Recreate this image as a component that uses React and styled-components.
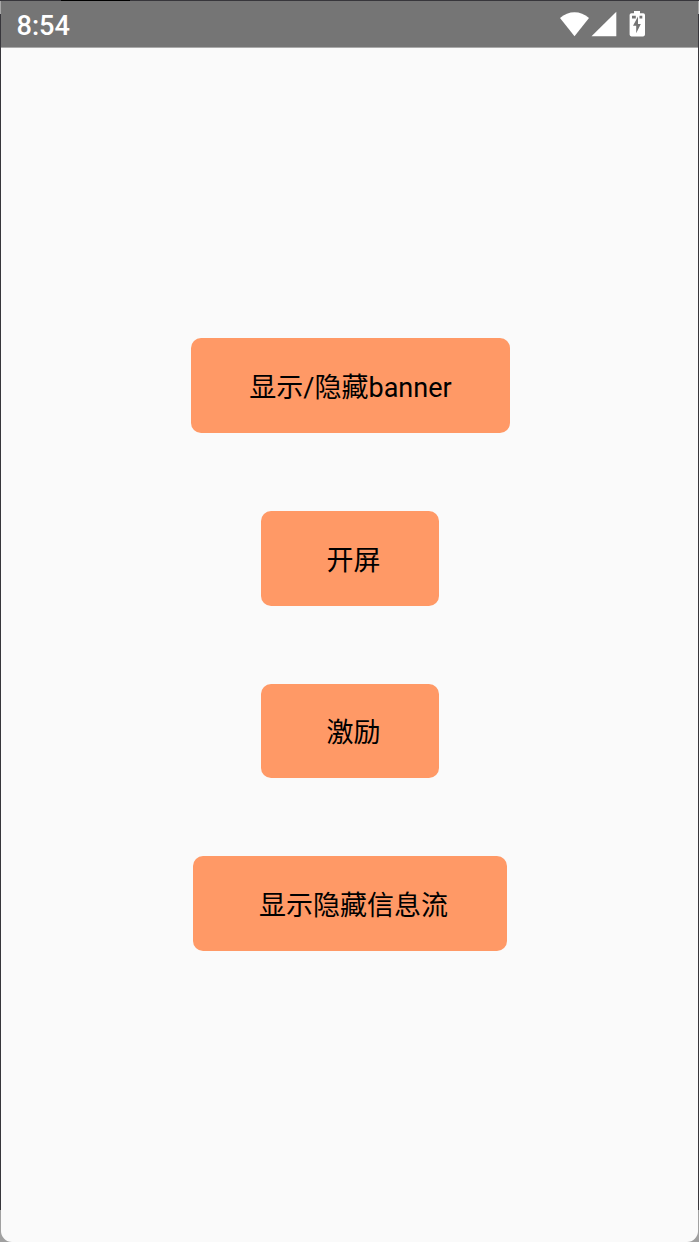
import React from "react";
import styled, { createGlobalStyle } from "styled-components";

const GlobalStyle = createGlobalStyle`
  * { box-sizing: border-box; }
  body { margin: 0; background: #a3a3a3; }
`;

const Device = styled.div`
  width: 699px;
  height: 1242px;
  padding: 1px 1px 0;
  overflow: hidden;
  background:
    linear-gradient(#000, #000) 61px 0 / 69px 1px no-repeat,
    linear-gradient(#37363b 0 1px, #a8a8a8 1px 14px, #37363b 14px 1210px, #a0a0a0 1210px);
  font-family: Roboto, "Noto Sans CJK SC", sans-serif;
`;

const Screen = styled.div`
  display: flex;
  flex-direction: column;
  height: 1241px;
  overflow: hidden;
  border-radius: 0 0 11px 11px;
  background: #fafafa;
`;

const StatusBar = styled.header`
  display: flex;
  flex: none;
  align-items: center;
  justify-content: space-between;
  height: 47px;
  padding: 0 50px 0 15.5px;
  border-bottom: 1px solid #aaa;
  background: #757575;
  color: #fff;
`;

const Clock = styled.time`
  padding-top: 4px;
  font-size: 27.2px;
  font-weight: 500;
  line-height: 32px;
`;

const StatusIcons = styled.svg`
  display: block;
  width: 88px;
  height: 28px;
`;

const Actions = styled.main`
  display: flex;
  flex-direction: column;
  align-items: center;
  gap: 77.7px;
  padding: 290.4px 0 0 1px;
`;

const ActionButton = styled.button`
  flex: none;
  width: ${({ $width }) => $width}px;
  height: 94.9px;
  padding: 4.4px 0 0 ${({ $shift = 0 }) => $shift}px;
  border: 0;
  border-radius: 10px;
  background: #ff9966;
  color: #000;
  font-family: inherit;
  font-size: 27px;
  line-height: 40px;
  white-space: nowrap;
`;

const actions = [
  { label: "显示/隐藏banner", width: 319, shift: 1 },
  { label: "开屏", width: 178, shift: 7 },
  { label: "激励", width: 178, shift: 7 },
  { label: "显示隐藏信息流", width: 313.4, shift: 7 },
];

export default function App() {
  return (
    <>
      <GlobalStyle />
      <Device>
        <Screen>
          <StatusBar>
            <Clock>8:54</Clock>
            <StatusIcons viewBox="0 0 88 28" fill="#fff" aria-hidden="true">
              <path d="M14.5 26.3 0 8C8.5 .4 20.5 .4 29 8Z" />
              <path d="M31.5 26.3 56.3 1.7V26.3Z" />
              <path
                fillRule="evenodd"
                d="M74 1h6v2.3h3.2q1.8 0 1.8 1.8v19.5q0 1.8-1.8 1.8H71.4q-1.8 0-1.8-1.8V5.1q0-1.8 1.8-1.8H74ZM78 6.5l-5 9.2h3.2v7.6l4.6-9.4H78Z"
              />
              <path fill="#757575" d="M72 5.8h3.8v2.8H72ZM79.5 5.8h2.8v2.8h-2.8Z" />
            </StatusIcons>
          </StatusBar>
          <Actions>
            {actions.map(({ label, width, shift }) => (
              <ActionButton key={label} type="button" $width={width} $shift={shift}>
                {label}
              </ActionButton>
            ))}
          </Actions>
        </Screen>
      </Device>
    </>
  );
}
